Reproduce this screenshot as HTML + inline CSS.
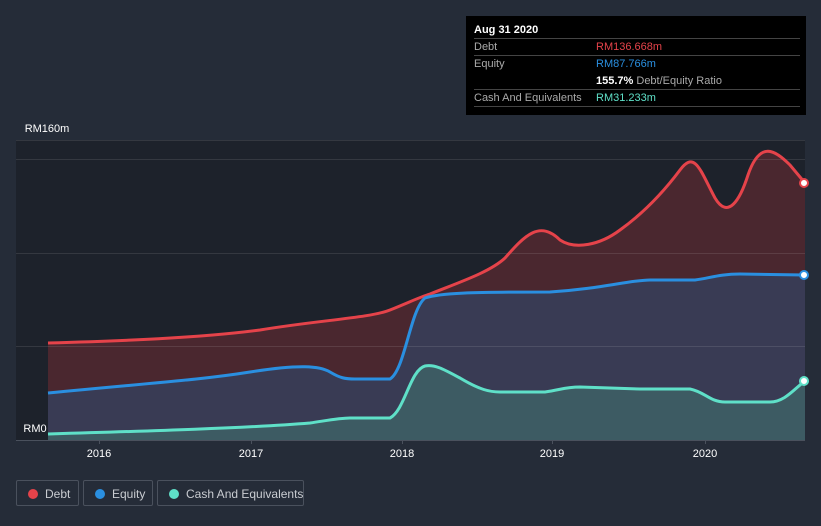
<!DOCTYPE html>
<html><head><meta charset="utf-8"><style>
body{margin:0;width:821px;height:526px;background:#252c38;font-family:"Liberation Sans",sans-serif;overflow:hidden;position:relative}
.tt{position:absolute;left:466px;top:16px;width:340px;height:99px;background:#000;color:#fff;font-size:11px}
.tt .r{position:absolute;left:8px;right:6px;height:16px;border-bottom:1px solid #444;line-height:17px}
.lg{position:absolute;top:480px;height:26px;border:1px solid #4a515d;border-radius:2px;color:#c9ccd1;font-size:12px;line-height:26px;box-sizing:border-box;white-space:nowrap}
.lg i{position:absolute;left:11px;top:8px;width:10px;height:10px;border-radius:50%}
.lg span{position:absolute;left:28px}
</style></head><body>
<svg width="821" height="526" style="position:absolute;left:0;top:0">
<rect x="16" y="140" width="789" height="300" fill="#1d222b"/>
<path d="M48,343 C120,341 200,338 260,330 C320,320 370,318 390,310 C410,302 420,297 430,294 C460,282 490,272 505,258 C525,235 540,220 560,240 C575,250 600,245 620,230 C645,212 665,190 680,170 C695,150 700,170 715,198 C728,220 740,200 748,175 C760,140 775,150 790,165 L805,183 L805,440 L48,440 Z" fill="#5a2a31" fill-opacity="0.75"/>
<path d="M48,393 C150,383 200,380 250,372 C300,364 320,366 330,372 C340,378 345,379 355,379 L390,379 C405,370 410,310 425,298 C440,293 470,292 550,292 C600,289 630,280 650,280 L695,280 C710,278 720,274 740,274 L805,275 L805,440 L48,440 Z" fill="#36405a" fill-opacity="0.85"/>
<path d="M48,434 C150,431 250,428 310,423 C330,420 340,418 350,418 L390,418 C405,410 410,370 425,366 C435,364 445,370 460,378 C480,390 490,392 500,392 L545,392 C560,390 565,387 580,387 L640,389 L690,389 C705,392 710,402 725,402 L770,402 C785,402 795,388 805,381 L805,440 L48,440 Z" fill="#3f6466" fill-opacity="0.8"/>
<g stroke="#ffffff" stroke-opacity="0.1" stroke-width="1">
<line x1="16" y1="140.5" x2="805" y2="140.5"/><line x1="16" y1="159.5" x2="805" y2="159.5"/><line x1="16" y1="253.5" x2="805" y2="253.5"/><line x1="16" y1="346.5" x2="805" y2="346.5"/>
</g>
<g fill="none" stroke-width="3">
<path d="M48,343 C120,341 200,338 260,330 C320,320 370,318 390,310 C410,302 420,297 430,294 C460,282 490,272 505,258 C525,235 540,220 560,240 C575,250 600,245 620,230 C645,212 665,190 680,170 C695,150 700,170 715,198 C728,220 740,200 748,175 C760,140 775,150 790,165 L805,183" stroke="#e5434a"/>
<path d="M48,393 C150,383 200,380 250,372 C300,364 320,366 330,372 C340,378 345,379 355,379 L390,379 C405,370 410,310 425,298 C440,293 470,292 550,292 C600,289 630,280 650,280 L695,280 C710,278 720,274 740,274 L805,275" stroke="#2a8fe0"/>
<path d="M48,434 C150,431 250,428 310,423 C330,420 340,418 350,418 L390,418 C405,410 410,370 425,366 C435,364 445,370 460,378 C480,390 490,392 500,392 L545,392 C560,390 565,387 580,387 L640,389 L690,389 C705,392 710,402 725,402 L770,402 C785,402 795,388 805,381" stroke="#5fe0c8"/>
</g>
<circle cx="804" cy="183" r="4" fill="#fff" stroke="#e5434a" stroke-width="2"/>
<circle cx="804" cy="275" r="4" fill="#fff" stroke="#2a8fe0" stroke-width="2"/>
<circle cx="804" cy="381" r="4" fill="#fff" stroke="#5fe0c8" stroke-width="2"/>
<line x1="16" y1="440.5" x2="805" y2="440.5" stroke="#4a515d"/>
<g stroke="#4a515d"><line x1="99.5" y1="440" x2="99.5" y2="444"/><line x1="251.5" y1="440" x2="251.5" y2="444"/><line x1="402.5" y1="440" x2="402.5" y2="444"/><line x1="552.5" y1="440" x2="552.5" y2="444"/><line x1="705.5" y1="440" x2="705.5" y2="444"/></g>
<g fill="#fff" font-size="11" text-anchor="middle" font-family="Liberation Sans">
<text x="99" y="457">2016</text><text x="251" y="457">2017</text><text x="402" y="457">2018</text><text x="552" y="457">2019</text><text x="705" y="457">2020</text>
<text x="47" y="132">RM160m</text><text x="35" y="432">RM0</text>
</g>
</svg>
<div class="tt">
<div class="r" style="top:6px;font-weight:bold">Aug 31 2020</div>
<div class="r" style="top:23px;color:#aaa">Debt<span style="position:absolute;left:122px;color:#e5434a">RM136.668m</span></div>
<div class="r" style="top:40px;color:#aaa;border:0">Equity<span style="position:absolute;left:122px;color:#2a8fe0">RM87.766m</span></div>
<div class="r" style="top:57px;color:#aaa"><span style="position:absolute;left:122px"><b style="color:#fff">155.7%</b> Debt/Equity Ratio</span></div>
<div class="r" style="top:74px;color:#aaa">Cash And Equivalents<span style="position:absolute;left:122px;color:#5fe0c8">RM31.233m</span></div>
</div>
<div class="lg" style="left:16px;width:63px"><i style="background:#e5434a"></i><span>Debt</span></div>
<div class="lg" style="left:83px;width:70px"><i style="background:#2a8fe0"></i><span>Equity</span></div>
<div class="lg" style="left:157px;width:147px"><i style="background:#5fe0c8"></i><span>Cash And Equivalents</span></div>
</body></html>
